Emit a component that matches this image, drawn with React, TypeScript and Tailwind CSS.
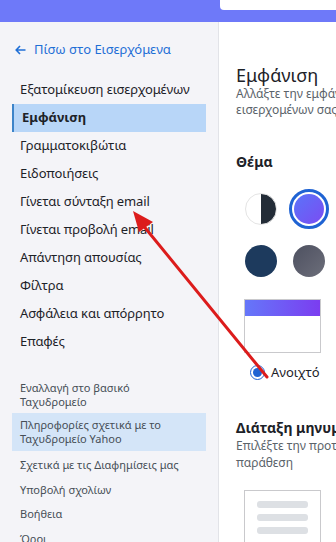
const NAV = [
  'Εξατομίκευση εισερχομένων',
  'Εμφάνιση',
  'Γραμματοκιβώτια',
  'Ειδοποιήσεις',
  'Γίνεται σύνταξη email',
  'Γίνεται προβολή email',
  'Απάντηση απουσίας',
  'Φίλτρα',
  'Ασφάλεια και απόρρητο',
  'Επαφές',
]

const LINKS = ['Σχετικά με τις Διαφημίσεις μας', 'Υποβολή σχολίων', 'Βοήθεια', 'Όροι']

function Sidebar() {
  return (
    <aside className="w-[219px] shrink-0 border-r border-[#e2e3e8] bg-[#f4f4f8] px-[12px] pt-[18px]">
      <div className="flex h-[20px] items-center gap-[8px] pl-[3px] text-[13px] text-[#1f6fd6]">
        <svg width="11" height="10" viewBox="0 0 11 10" fill="none" stroke="currentColor" strokeWidth="1.6">
          <path d="M10.5 5H1.5M5 1L1.2 5L5 9" />
        </svg>
        <span>Πίσω στο Εισερχόμενα</span>
      </div>

      <ul className="mt-[16px]">
        {NAV.map((label) =>
          label === 'Εμφάνιση' ? (
            <li
              key={label}
              className="flex h-[28px] items-center border-l-2 border-[#3d84c9] bg-[#b8d6f8] pl-[8px] text-[13px] font-bold text-[#1d2228]"
            >
              {label}
            </li>
          ) : (
            <li key={label} className="flex h-[28px] items-center pl-[8px] text-[13px] tracking-[-0.1px] text-[#1d2228]">
              {label}
            </li>
          ),
        )}
      </ul>

      <div className="mt-[25px] text-[11px] leading-[14px] text-[#464e56]">
        <div className="pl-[8px]">
          Εναλλαγή στο βασικό
          <br />
          Ταχυδρομείο
        </div>
        <div className="mt-[4px] bg-[#d4e5f8] py-[5px] pl-[8px]">
          Πληροφορίες σχετικά με το
          <br />
          Ταχυδρομείο Yahoo
        </div>
        <ul className="mt-[2px]">
          {LINKS.map((l) => (
            <li key={l} className="flex h-[24.5px] items-center pl-[8px]">
              {l}
            </li>
          ))}
        </ul>
      </div>
    </aside>
  )
}

function ThemeDot({ className, selected }: { className: string; selected?: boolean }) {
  if (selected) {
    return (
      <div className="-m-[4px] flex h-[40px] w-[40px] items-center justify-center rounded-full border-[3px] border-[#1f63d3] bg-white">
        <div className={`h-[30px] w-[30px] rounded-full ${className}`} />
      </div>
    )
  }
  return <div className={`h-[32px] w-[32px] rounded-full ${className}`} />
}

function Main() {
  return (
    <main className="min-w-0 flex-1 overflow-hidden whitespace-nowrap bg-white pl-[17px] pt-[42px] text-[#1d2228]">
      <h1 className="text-[18px] leading-[22px]">Εμφάνιση</h1>
      <p className="text-[12px] leading-[16px] text-[#5b636a]">
        Αλλάξτε την εμφάνιση των
        <br />
        εισερχομένων σας
      </p>

      <h2 className="mt-[35px] text-[14px] font-bold leading-[18px]">Θέμα</h2>

      <div className="mt-[22px] grid w-[89px] grid-cols-2 gap-x-[16px] gap-y-[20px] pl-[9px]">
        <div className="h-[32px] w-[32px] overflow-hidden rounded-full border border-[#e4e4e4] bg-[linear-gradient(90deg,#ffffff_50%,#232c37_50%)]" />
        <ThemeDot selected className="bg-[linear-gradient(135deg,#5a74f9,#7b4cf2)]" />
        <ThemeDot className="bg-[#1d3a5d]" />
        <ThemeDot className="bg-[linear-gradient(135deg,#4d5060,#6c6e7a)]" />
      </div>

      <div className="ml-[8px] mt-[22px] h-[54px] w-[77px] border border-[#c9c9cc] bg-white">
        <div className="h-[16px] bg-[linear-gradient(90deg,#6577f9,#7b3df0)]" />
      </div>

      <div className="ml-[14px] mt-[10px] flex items-center gap-[6px] text-[13px]">
        <span className="flex h-[15px] w-[15px] items-center justify-center rounded-full border-[1.5px] border-[#1f63d3]">
          <span className="h-[9px] w-[9px] rounded-full bg-[#1f63d3]" />
        </span>
        Ανοιχτό
      </div>

      <h2 className="mt-[36px] text-[14px] font-bold leading-[18px]">Διάταξη μηνυμάτων</h2>
      <p className="text-[12px] leading-[17px] text-[#5b636a]">
        Επιλέξτε την προτιμώμενη
        <br />
        παράθεση
      </p>

      <div className="ml-[8px] mt-[19px] flex h-[60px] w-[77px] flex-col gap-[6px] border border-[#c9c9cc] px-[12px] pt-[10px]">
        <div className="h-[7px] rounded-[3px] bg-[#dde0e4]" />
        <div className="h-[7px] rounded-[3px] bg-[#dde0e4]" />
        <div className="h-[7px] rounded-[3px] bg-[#dde0e4]" />
      </div>
    </main>
  )
}

export default function App() {
  return (
    <div className="relative h-[542px] w-[336px] overflow-hidden bg-white font-['Noto_Sans',sans-serif]">
      <header className="flex h-[22px] justify-end bg-[#6e79f9]">
        <div className="h-[10px] w-[116px] rounded-bl-[4px] bg-white" />
      </header>
      <div className="flex h-[520px]">
        <Sidebar />
        <Main />
      </div>

      <svg className="pointer-events-none absolute left-0 top-0" width="336" height="542">
        <line x1="267" y1="377" x2="142" y2="224" stroke="#dc1c1c" strokeWidth="3" strokeLinecap="round" />
        <polygon points="133,211 153,222 139,232" fill="#dc1c1c" />
      </svg>
    </div>
  )
}
